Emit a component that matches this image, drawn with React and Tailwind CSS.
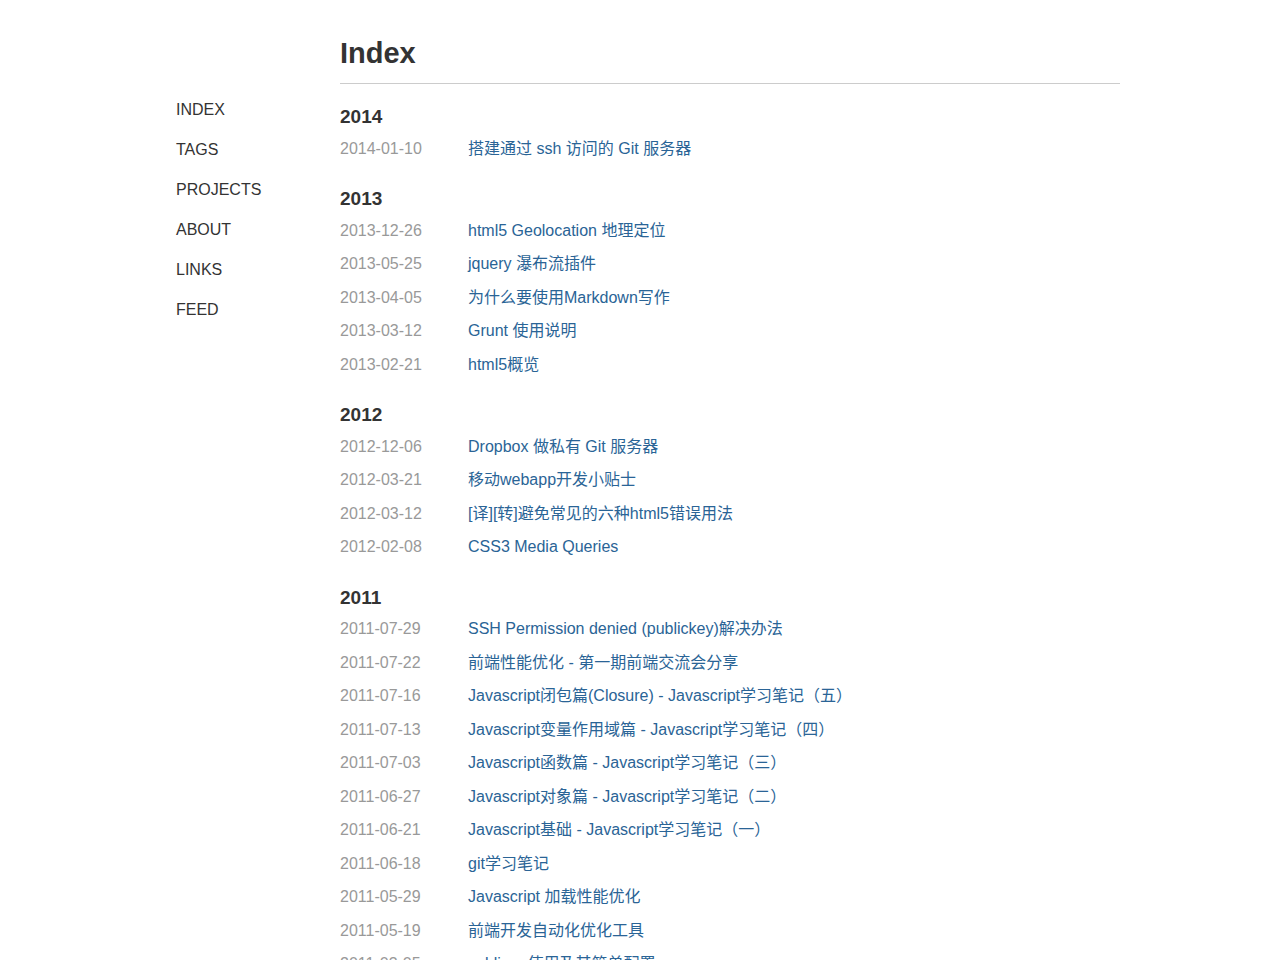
const nav = ["INDEX", "TAGS", "PROJECTS", "ABOUT", "LINKS", "FEED"];

const groups = [
  {
    year: "2014",
    posts: [["2014-01-10", "搭建通过 ssh 访问的 Git 服务器"]],
  },
  {
    year: "2013",
    posts: [
      ["2013-12-26", "html5 Geolocation 地理定位"],
      ["2013-05-25", "jquery 瀑布流插件"],
      ["2013-04-05", "为什么要使用Markdown写作"],
      ["2013-03-12", "Grunt 使用说明"],
      ["2013-02-21", "html5概览"],
    ],
  },
  {
    year: "2012",
    posts: [
      ["2012-12-06", "Dropbox 做私有 Git 服务器"],
      ["2012-03-21", "移动webapp开发小贴士"],
      ["2012-03-12", "[译][转]避免常见的六种html5错误用法"],
      ["2012-02-08", "CSS3 Media Queries"],
    ],
  },
  {
    year: "2011",
    posts: [
      ["2011-07-29", "SSH Permission denied (publickey)解决办法"],
      ["2011-07-22", "前端性能优化 - 第一期前端交流会分享"],
      ["2011-07-16", "Javascript闭包篇(Closure) - Javascript学习笔记（五）"],
      ["2011-07-13", "Javascript变量作用域篇 - Javascript学习笔记（四）"],
      ["2011-07-03", "Javascript函数篇 - Javascript学习笔记（三）"],
      ["2011-06-27", "Javascript对象篇 - Javascript学习笔记（二）"],
      ["2011-06-21", "Javascript基础 - Javascript学习笔记（一）"],
      ["2011-06-18", "git学习笔记"],
      ["2011-05-29", "Javascript 加载性能优化"],
      ["2011-05-19", "前端开发自动化优化工具"],
      ["2011-03-05", "sublime 使用及其简单配置"],
    ],
  },
];

export default function App() {
  return (
    <div
      className="h-[960px] overflow-hidden bg-white text-[16px] text-[#333]"
      style={{ fontFamily: '"Liberation Sans", Arial, "Noto Sans CJK SC", sans-serif' }}
    >
      <div className="ml-[176px] flex w-[944px]">
        <nav className="mt-[90px] w-[164px] shrink-0">
          <ul>
            {nav.map((n) => (
              <li key={n} className="leading-[40px]">
                <a href="#" className="text-[#333]">{n}</a>
              </li>
            ))}
          </ul>
        </nav>
        <main className="w-[780px] pt-[33px]">
          <h1 className="border-b border-[#ccc] pb-[10px] text-[29px] font-bold leading-[40px] text-[#333]">
            Index
          </h1>
          <div className="pt-[18px]">
            {groups.map((g) => (
              <section key={g.year} className="mb-[19px]">
                <h2 className="h-[29.5px] text-[19px] font-bold leading-[30.5px] text-[#333]">
                  {g.year}
                </h2>
                <ul>
                  {g.posts.map(([d, t]) => (
                    <li key={d + t} className="flex h-[33.5px] items-center leading-[33.5px]">
                      <span className="w-[128px] shrink-0 text-[#999]">{d}</span>
                      <a href="#" className="text-[#2a6496]">{t}</a>
                    </li>
                  ))}
                </ul>
              </section>
            ))}
          </div>
        </main>
      </div>
    </div>
  );
}
